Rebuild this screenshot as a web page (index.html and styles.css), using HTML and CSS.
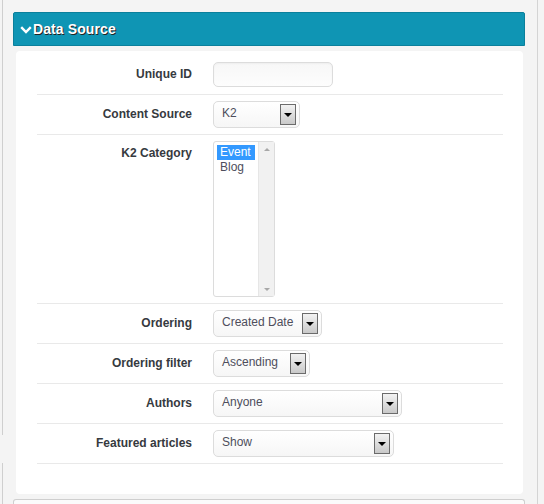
FILE: index.html
```html
<!DOCTYPE html>
<html>
<head>
<meta charset="utf-8">
<link rel="stylesheet" href="styles.css">
</head>
<body>
<div class="page">
  <div class="rail">
    <div class="rail-top"></div>
    <div class="rail-gap"></div>
    <div class="rail-bottom"></div>
  </div>
  <div class="main">
    <div class="header">
      <svg class="chev" width="12" height="8" viewBox="0 0 12 8"><polyline points="1.2,1.2 6,6 10.8,1.2" fill="none" stroke="#fff" stroke-width="2.4"/></svg>
      <span class="title">Data Source</span>
    </div>
    <div class="panel">
      <div class="row">
        <div class="label">Unique ID</div>
        <div class="input"></div>
      </div>
      <div class="row">
        <div class="label">Content Source</div>
        <div class="select w-source"><span class="val">K2</span><span class="btn"><span class="tri"></span></span></div>
      </div>
      <div class="row row-tall">
        <div class="label label-top">K2 Category</div>
        <div class="listbox">
          <div class="options">
            <div class="opt sel">Event</div>
            <div class="opt">Blog</div>
          </div>
          <div class="scroll">
            <span class="up"></span>
            <span class="down"></span>
          </div>
        </div>
      </div>
      <div class="row">
        <div class="label">Ordering</div>
        <div class="select w-order"><span class="val">Created Date</span><span class="btn"><span class="tri"></span></span></div>
      </div>
      <div class="row">
        <div class="label">Ordering filter</div>
        <div class="select w-filter"><span class="val">Ascending</span><span class="btn"><span class="tri"></span></span></div>
      </div>
      <div class="row">
        <div class="label">Authors</div>
        <div class="select w-authors"><span class="val">Anyone</span><span class="btn"><span class="tri"></span></span></div>
      </div>
      <div class="row">
        <div class="label">Featured articles</div>
        <div class="select w-featured"><span class="val">Show</span><span class="btn"><span class="tri"></span></span></div>
      </div>
    </div>
    <div class="next-panel"></div>
  </div>
</div>
</body>
</html>
```
FILE: styles.css
```css
* { box-sizing: border-box; }
html, body { margin: 0; padding: 0; }
body {
  background: #f4f4f4;
  font-family: "Liberation Sans", Arial, sans-serif;
  font-size: 12px;
  width: 544px;
  height: 504px;
  overflow: hidden;
}
.page {
  display: flex;
  width: 538px;
  height: 504px;
  border-right: 1px solid #d4d4d4;
}
.rail {
  width: 3px;
  display: flex;
  flex-direction: column;
}
.rail-top { height: 435px; border-right: 1px solid #cfcfcf; }
.rail-gap { height: 28px; }
.rail-bottom { flex: 1; border-right: 1px solid #cfcfcf; }
.main {
  flex: 1;
  padding: 12px 12px 0 10px;
  display: flex;
  flex-direction: column;
}
.header {
  height: 34px;
  background: #0f95b4;
  border: 1px solid #0b809c;
  border-radius: 2px 2px 0 0;
  display: flex;
  align-items: center;
  padding-left: 6px;
  color: #fff;
}
.chev { margin-right: 1px; margin-top: 1px; }
.title {
  font-size: 14px;
  font-weight: bold;
  text-shadow: 1px 1px 0 #222;
  letter-spacing: 0.1px;
}
.panel {
  margin: 5px 2px 0 3px;
  height: 443px;
  background: #fff;
  border-radius: 4px;
  padding: 4px 20px 0 21px;
}
.row {
  display: flex;
  align-items: center;
  height: 40px;
  border-bottom: 1px solid #e9e9e9;
}
.row-tall {
  height: 169px;
  align-items: flex-start;
}
.label {
  width: 155px;
  margin-right: 21px;
  text-align: right;
  font-weight: bold;
  color: #363a40;
  line-height: 15px;
}
.label-top { margin-top: 11px; }
.input {
  width: 120px;
  height: 25px;
  border: 1px solid #dcdcdc;
  border-radius: 5px;
  background: linear-gradient(#f7f7f7, #fdfdfd);
  box-shadow: inset 0 1px 2px rgba(0,0,0,0.04);
}
.select {
  height: 27px;
  border: 1px solid #dcdcdc;
  border-radius: 5px;
  background: linear-gradient(#ffffff, #f6f6f6);
  display: flex;
  align-items: center;
  justify-content: space-between;
  padding: 0 3px 0 8px;
  color: #4e4e5c;
}
.w-source { width: 87px; }
.w-order { width: 109px; }
.w-filter { width: 97px; }
.w-authors { width: 189px; }
.w-featured { width: 181px; }
.val { line-height: 15px; margin-top: -2px; }
.btn {
  width: 16px;
  height: 21px;
  border: 1px solid #6b6b6b;
  background: linear-gradient(#f2f2f2, #c9c9c9);
  display: flex;
  justify-content: center;
  align-items: center;
}
.tri {
  width: 0;
  height: 0;
  border-left: 4px solid transparent;
  border-right: 4px solid transparent;
  border-top: 4px solid #000;
}
.listbox {
  margin-top: 6px;
  width: 62px;
  height: 156px;
  border: 1px solid #dcdcdc;
  border-radius: 3px;
  display: flex;
  background: #fff;
}
.options {
  flex: 1;
  padding: 3px 0 0 3px;
}
.opt {
  color: #4e4e5c;
  font-size: 12px;
  line-height: 15px;
  padding-left: 3px;
  width: 38px;
}
.opt.sel {
  background: #3399ff;
  color: #fff;
}
.scroll {
  width: 16px;
  background: #f1f1f1;
  border-left: 1px solid #e6e6e6;
  display: flex;
  flex-direction: column;
  justify-content: space-between;
  align-items: center;
  padding: 6px 0 5px;
}
.up {
  width: 0; height: 0;
  border-left: 3px solid transparent;
  border-right: 3px solid transparent;
  border-bottom: 3px solid #a8a8a8;
}
.down {
  width: 0; height: 0;
  border-left: 3px solid transparent;
  border-right: 3px solid transparent;
  border-top: 3px solid #a8a8a8;
}
.next-panel {
  margin-top: 5px;
  flex: 1;
  border: 1px solid #cfcfcf;
  border-bottom: none;
  border-radius: 3px 3px 0 0;
  background: #fbfbfb;
}
```
